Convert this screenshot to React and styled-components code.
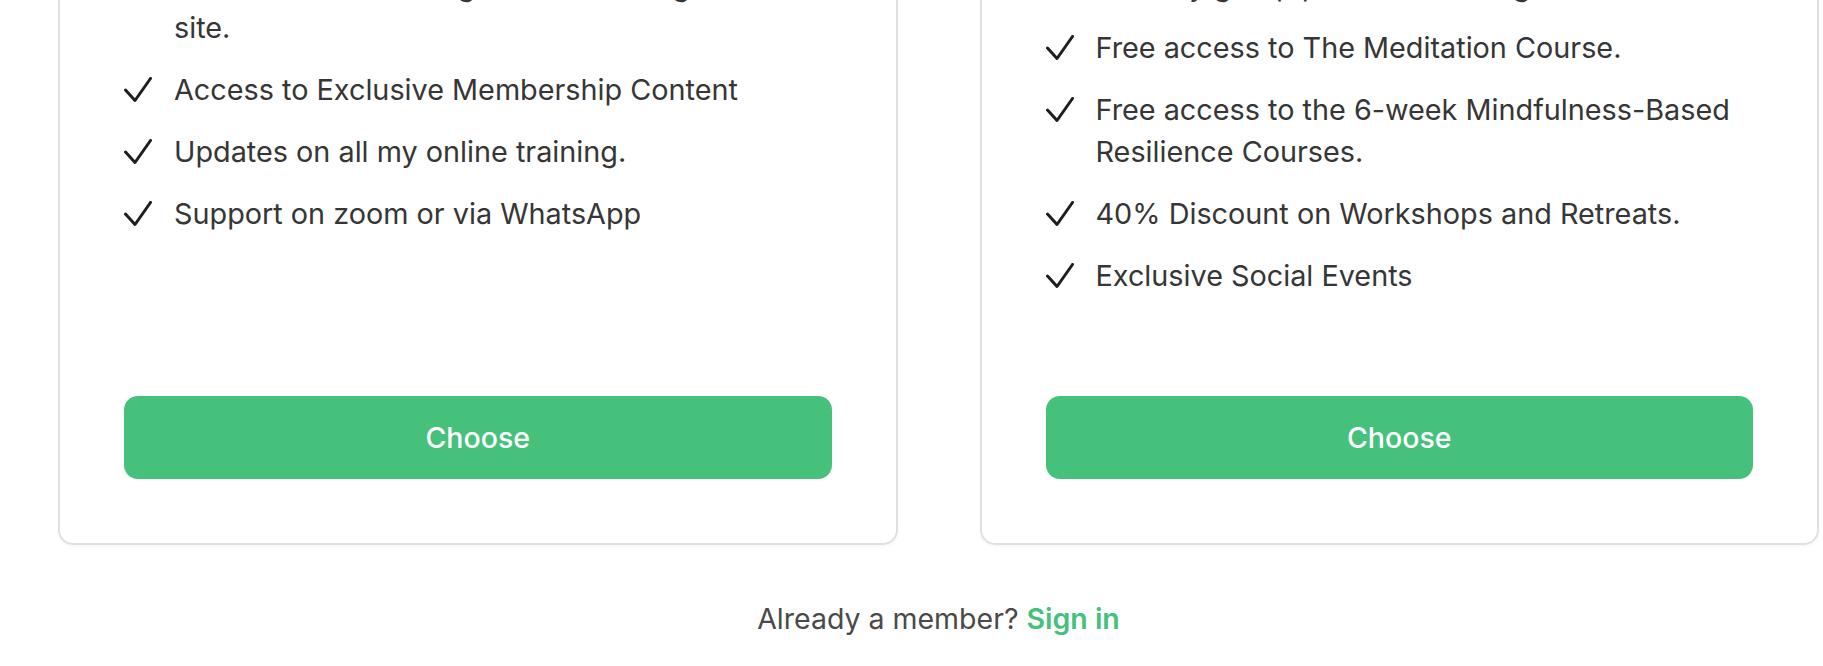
import React from 'react';
import styled, { createGlobalStyle } from 'styled-components';

const GlobalStyle = createGlobalStyle`
  html, body {
    margin: 0;
    padding: 0;
    background: #ffffff;
    overflow: hidden;
  }
  body {
    font-family: Inter, "Noto Sans", "Liberation Sans", sans-serif;
    color: #363636;
  }
`;

const Page = styled.div`
  /* the page is scrolled: the card tops sit above the window */
  margin-top: -101px;
  padding: 0 4px 20px 58px;
`;

const Plans = styled.div`
  display: grid;
  grid-template-columns: 1fr 1fr;
  column-gap: 82px;
`;

const Card = styled.div`
  display: flex;
  flex-direction: column;
  border: 2px solid #e0e0e0;
  border-radius: 15px;
  padding: 64px;
  box-shadow: 0 2px 3px rgba(0, 0, 0, 0.03);
`;

const Features = styled.ul`
  list-style: none;
  margin: 0 0 99px;
  padding: 0;
  display: flex;
  flex-direction: column;
  gap: 20px;
`;

const Feature = styled.li`
  display: flex;
  align-items: flex-start;
  gap: 22px;
  font-size: 28.8px;
  line-height: 42px;
  color: #363636;
`;

const Tick = styled.span`
  flex: none;
  display: flex;
  align-items: center;
  height: 42px;
  color: #1e1e1e;
`;

const ChooseButton = styled.button`
  margin-top: auto;
  height: 83px;
  width: 100%;
  border: none;
  border-radius: 14px;
  background: #45c17c;
  color: #ffffff;
  font-family: inherit;
  font-size: 28.5px;
  font-weight: 500;
  cursor: pointer;
`;

const Footer = styled.p`
  margin: 53px 0 0;
  text-align: center;
  font-size: 28.5px;
  line-height: 42px;
  color: #4a4a4a;
`;

const SignIn = styled.a`
  color: #45c17c;
  font-weight: 600;
  text-decoration: none;
`;

const Check = () => (
  <Tick>
    <svg width="28" height="26" viewBox="0 0 28 26" fill="none">
      <polyline
        points="1.5,13 11,23.5 26.5,1.5"
        stroke="currentColor"
        strokeWidth="3"
        strokeLinecap="round"
        strokeLinejoin="round"
      />
    </svg>
  </Tick>
);

const plans = [
  [
    'Full access to all the guided recordings on this site.',
    'Access to Exclusive Membership Content',
    'Updates on all my online training.',
    'Support on zoom or via WhatsApp',
  ],
  [
    'Monthly group practice meetings',
    'Free access to The Meditation Course.',
    'Free access to the 6-week Mindfulness-Based Resilience Courses.',
    '40% Discount on Workshops and Retreats.',
    'Exclusive Social Events',
  ],
];

const App = () => {
  return (
    <>
      <GlobalStyle />
      <Page>
        <Plans>
          {plans.map((items, i) => (
            <Card key={i}>
              <Features>
                {items.map((text) => (
                  <Feature key={text}>
                    <Check />
                    <span>{text}</span>
                  </Feature>
                ))}
              </Features>
              <ChooseButton>Choose</ChooseButton>
            </Card>
          ))}
        </Plans>
        <Footer>
          Already a member? <SignIn href="#">Sign in</SignIn>
        </Footer>
      </Page>
    </>
  );
};

export default App;
